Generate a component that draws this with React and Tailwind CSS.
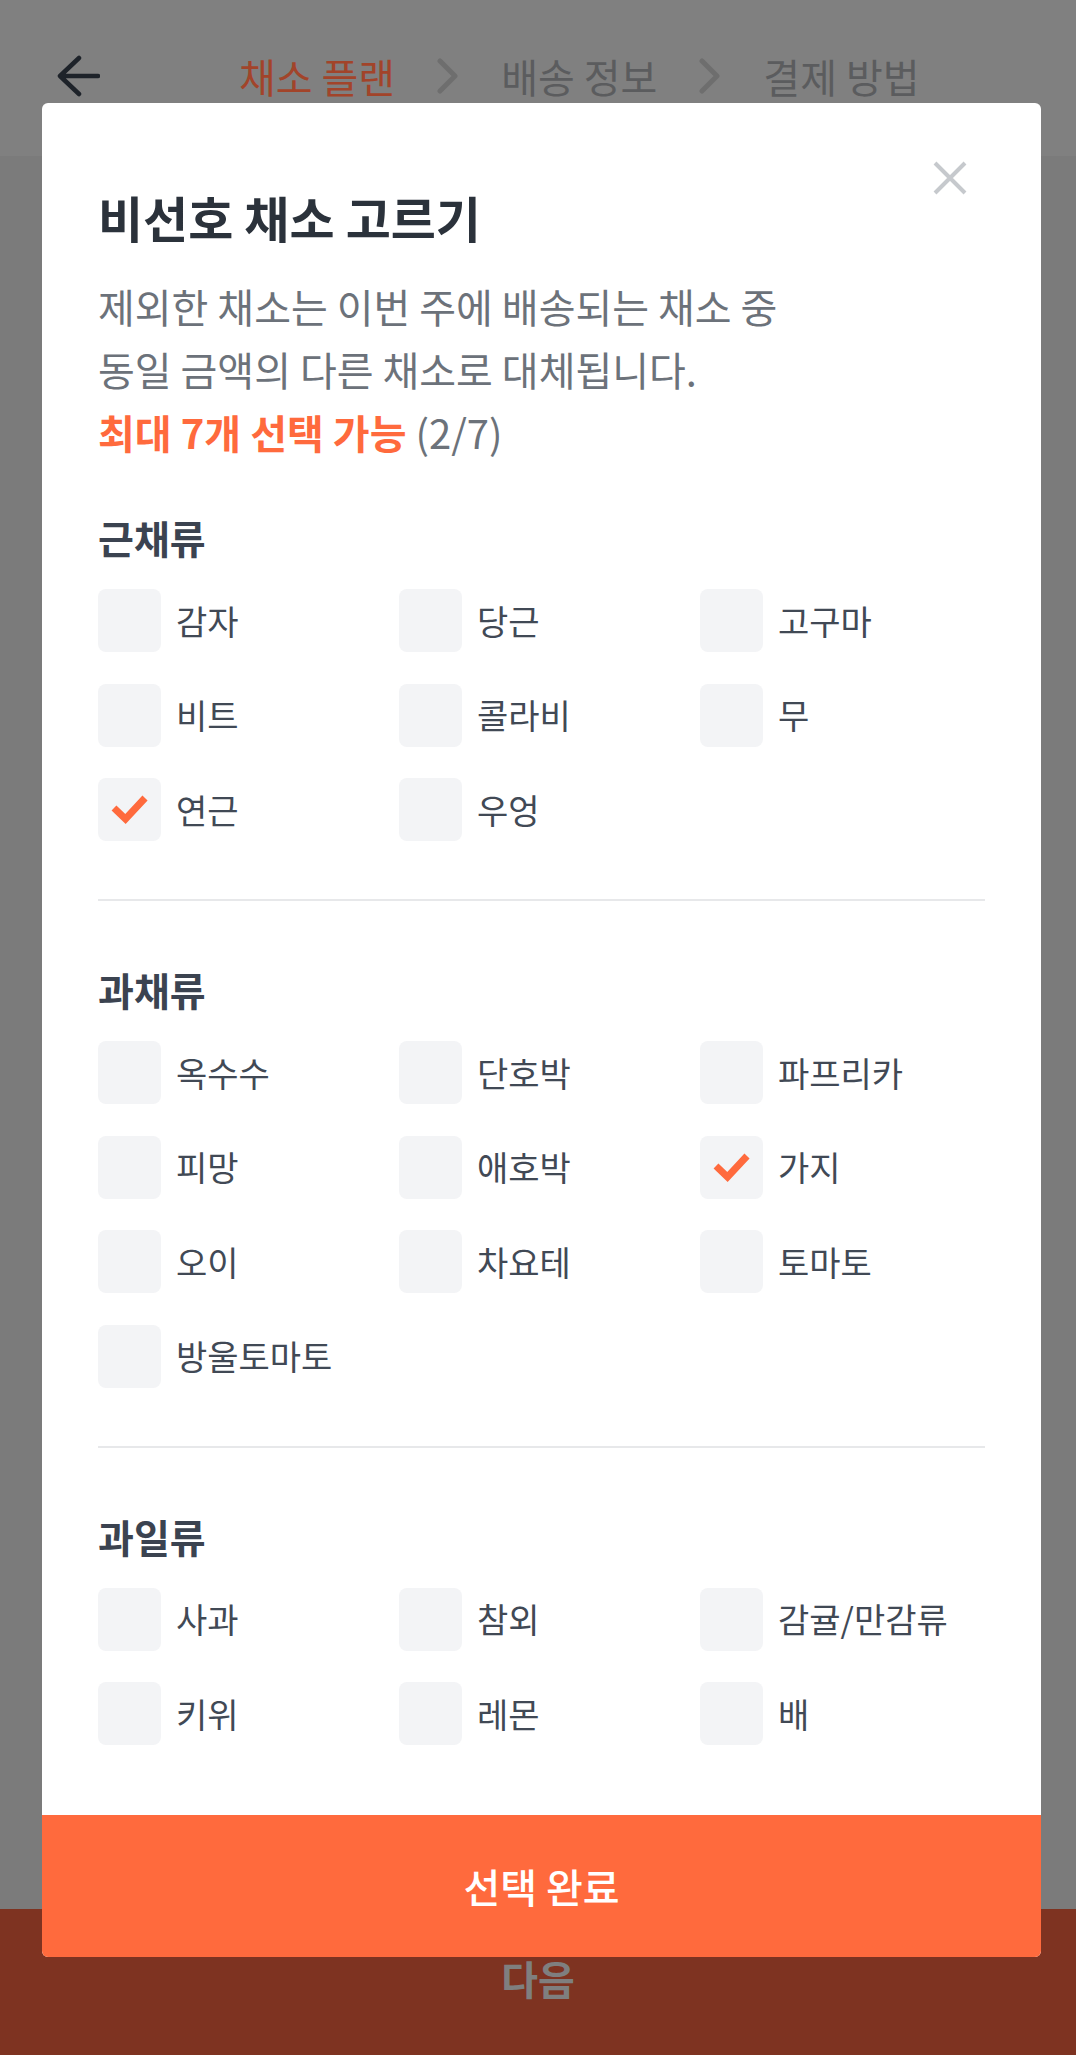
import { useState } from "react";

const sections = [
  {
    title: "근채류",
    items: ["감자", "당근", "고구마", "비트", "콜라비", "무", "연근", "우엉"],
  },
  {
    title: "과채류",
    items: ["옥수수", "단호박", "파프리카", "피망", "애호박", "가지", "오이", "차요테", "토마토", "방울토마토"],
  },
  {
    title: "과일류",
    items: ["사과", "참외", "감귤/만감류", "키위", "레몬", "배"],
  },
];

const Chevron = () => (
  <svg width="24" height="36" viewBox="0 0 24 36" fill="none">
    <polyline points="4,3 19,18 4,33" stroke="#6e6e6e" strokeWidth="5" strokeLinecap="round" strokeLinejoin="round" />
  </svg>
);

const CheckItem = ({ label, checked, onToggle }) => (
  <button type="button" onClick={onToggle} className="flex items-center text-left">
    <span className="w-[63px] h-[63px] rounded-[8px] bg-[#f3f4f6] flex items-center justify-center shrink-0">
      {checked && (
        <svg width="63" height="63" viewBox="0 0 63 63" fill="none">
          <polyline points="16,30 27.5,41 47,20" stroke="#ff6a3d" strokeWidth="7" />
        </svg>
      )}
    </span>
    <span className="ml-[15px] text-[34px] leading-[44px] text-[#414955]">{label}</span>
  </button>
);

const App = () => {
  const [selected, setSelected] = useState(["연근", "가지"]);

  const toggle = (name) => {
    setSelected((prev) =>
      prev.includes(name) ? prev.filter((n) => n !== name) : prev.length >= 7 ? prev : [...prev, name]
    );
  };

  return (
    <div className="relative h-[2055px] w-[1076px] flex flex-col font-['Noto_Sans_CJK_KR','Noto_Sans',sans-serif] overflow-hidden">
      {/* page behind the dimmed overlay */}
      <div className="h-[156px] bg-[#808080] pt-[54px]">
        <div className="flex items-center h-[44px]">
          <svg className="ml-[56px]" width="44" height="44" viewBox="0 0 44 44" fill="none">
            <path d="M4 22H42M23 4L4 22L23 40" stroke="#1e232a" strokeWidth="4.5" strokeLinecap="round" strokeLinejoin="round" />
          </svg>
          <div className="ml-[139px] flex items-center gap-[41px] text-[40px] leading-[44px] text-[#5b5c5e]">
            <span className="text-[#a2442a]">채소 플랜</span>
            <Chevron />
            <span>배송 정보</span>
            <Chevron />
            <span>결제 방법</span>
          </div>
        </div>
      </div>
      <div className="flex-1 bg-[#7b7b7b]" />
      <div className="h-[146px] bg-[#7e3321] flex justify-center pt-[45px]">
        <span className="text-[40px] leading-[48px] font-bold text-[#7f7f7f]">다음</span>
      </div>

      {/* modal */}
      <div className="absolute left-[42px] top-[103px] w-[999px] bg-white rounded-[6px] overflow-hidden">
        <button type="button" className="absolute top-[57px] right-[73px]">
          <svg width="36" height="36" viewBox="0 0 36 36" fill="none">
            <path d="M3 3L33 33M33 3L3 33" stroke="#c6c9cd" strokeWidth="4" />
          </svg>
        </button>

        <div className="px-[56px] pt-[84px] pb-[70px]">
          <h2 className="text-[49px] leading-[60px] font-bold text-[#2b323b]">비선호 채소 고르기</h2>
          <div className="mt-[28px] text-[40px] leading-[63px] text-[#6c727a]">
            <p>제외한 채소는 이번 주에 배송되는 채소 중</p>
            <p>동일 금액의 다른 채소로 대체됩니다.</p>
            <p>
              <span className="font-bold text-[#ff6a3d]">최대 7개 선택 가능</span> ({selected.length}/7)
            </p>
          </div>

          {sections.map((section, i) => (
            <div key={section.title}>
              {i > 0 && <div className="mt-[58px] h-[2px] bg-[#e7e8ea]" />}
              <h3 className={`${i > 0 ? "mt-[64px]" : "mt-[49px]"} text-[39px] leading-[48px] font-bold text-[#3b4350]`}>
                {section.title}
              </h3>
              <div className="mt-[28px] grid grid-cols-[301px_301px_1fr] gap-y-[31.5px]">
                {section.items.map((item) => (
                  <CheckItem
                    key={item}
                    label={item}
                    checked={selected.includes(item)}
                    onToggle={() => toggle(item)}
                  />
                ))}
              </div>
            </div>
          ))}
        </div>

        <button type="button" className="w-full h-[142px] bg-[#ff6a3d] text-white text-[40px] font-medium">
          선택 완료
        </button>
      </div>
    </div>
  );
};

export default App;
